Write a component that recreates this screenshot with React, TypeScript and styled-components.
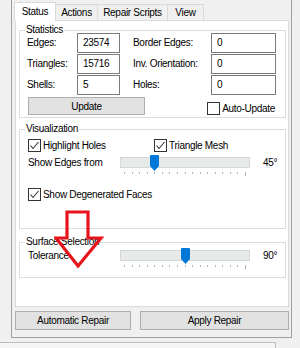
import styled, { createGlobalStyle } from "styled-components";

const GlobalStyle = createGlobalStyle`
	* {
		box-sizing: border-box;
	}

	html,
	body {
		margin: 0;
		padding: 0;
	}

	body {
		background-color: #f0f0f0;
		font-family: "Liberation Sans", Arial, sans-serif;
		font-size: 10px;
		letter-spacing: -0.3px;
		color: #000;
	}
`;

const Window = styled.div`
	width: 300px;
	height: 348px;
	position: relative;
	overflow: hidden;
`;

const Frame = styled.div`
	margin-left: 11px;
	width: 281px;
	height: 338px;
	border: 1px solid #a0a0a0;
	border-top: none;
	padding: 2px 1px 7px 3px;
	display: flex;
	flex-direction: column;
`;

const TabStrip = styled.div`
	height: 18px;
	margin-left: -1px;
	display: flex;
	align-items: flex-end;
`;

const Tab = styled.div<{ $active?: boolean; $width: number }>`
	width: ${(p) => p.$width}px;
	height: ${(p) => (p.$active ? 19 : 16)}px;
	margin-bottom: ${(p) => (p.$active ? -1 : 0)}px;
	position: relative;
	z-index: ${(p) => (p.$active ? 1 : 0)};
	background-color: ${(p) => (p.$active ? "#fff" : "#f0f0f0")};
	border: 1px solid #d9d9d9;
	border-bottom: none;
	border-left: ${(p) => (p.$active ? "1px solid #d9d9d9" : "none")};
	display: flex;
	justify-content: center;
	align-items: center;
	padding-bottom: ${(p) => (p.$active ? 1 : 0)}px;
`;

const Panel = styled.div`
	width: 274px;
	height: 287px;
	border: 1px solid #d9d9d9;
	background-color: #fff;
	padding: 3px 2px 0 3px;
`;

const Group = styled.fieldset<{ $gapTop?: number; $gapBottom: number }>`
	margin: ${(p) => p.$gapTop ?? 0}px 0 0 0;
	padding: 0 0 ${(p) => p.$gapBottom}px 8px;
	border: 1px solid #dcdcdc;
	min-width: 0;
`;

const Legend = styled.legend`
	margin-left: -3px;
	padding: 0 1px;
	line-height: 12px;
	height: 12px;
`;

const StatGrid = styled.div`
	margin: -3px 0 0 -1px;
	display: grid;
	grid-template-columns: 50px 43px 91px 65px;
	grid-template-rows: 20px 20px 20px;
	row-gap: 1px;
	align-items: center;
`;

const StatLabel = styled.span<{ $inset?: boolean }>`
	padding-left: ${(p) => (p.$inset ? 13 : 0)}px;
	padding-bottom: 1px;
`;

const Field = styled.input`
	width: 100%;
	height: 20px;
	margin: 0;
	border: 1px solid #7a7a7a;
	padding: 0 0 1px 5px;
	font: inherit;
	letter-spacing: inherit;
	color: #000;
	background-color: #fff;
	outline: none;
`;

const UpdateRow = styled.div`
	margin-top: 2px;
	height: 18px;
	padding-right: 10px;
	display: flex;
	justify-content: space-between;
	align-items: flex-end;
`;

const Button = styled.button<{ $width: number; $height: number }>`
	width: ${(p) => p.$width}px;
	height: ${(p) => p.$height}px;
	margin: 0;
	padding: 0;
	border: 1px solid #adadad;
	background-color: #e1e1e1;
	font: inherit;
	letter-spacing: inherit;
	color: #000;
`;

const Check = styled.label`
	height: 13px;
	display: flex;
	align-items: center;
	gap: 2px;
	line-height: 13px;
	white-space: nowrap;
`;

const Box = styled.span`
	width: 13px;
	height: 13px;
	flex: none;
	border: 1px solid #333;
	background-color: #fff;
	display: flex;

	svg {
		display: block;
	}
`;

const CheckRow = styled.div<{ $gapTop: number }>`
	margin-top: ${(p) => p.$gapTop}px;
	display: grid;
	grid-template-columns: 126px auto;
`;

const SliderRow = styled.div<{ $gapTop: number }>`
	margin-top: ${(p) => p.$gapTop}px;
	height: 21px;
	display: grid;
	grid-template-columns: 92px 130px auto;
`;

const RowText = styled.span<{ $inset?: number }>`
	padding-top: 2px;
	padding-left: ${(p) => p.$inset ?? 0}px;
	line-height: 11px;
	white-space: nowrap;
`;

const Slider = styled.div`
	position: relative;
	height: 21px;
`;

const Track = styled.div`
	margin-top: 2px;
	height: 11px;
	border: 1px solid #d6d6d6;
	background-color: #e7eaea;
`;

const Thumb = styled.svg`
	position: absolute;
	top: 0;
	display: block;
`;

const Ticks = styled.div`
	margin-top: 4px;
	padding: 0 4px;
	display: flex;
	justify-content: space-between;
	align-items: flex-start;
`;

const Tick = styled.span<{ $long?: boolean }>`
	width: 1px;
	height: ${(p) => (p.$long ? 4 : 2)}px;
	background-color: #b4b4b4;
`;

const ButtonRow = styled.div`
	margin-top: 4px;
	display: flex;
	gap: 9px;
`;

const BottomPane = styled.div`
	margin-top: 4px;
	width: 276px;
	height: 6px;
	border-top: 1px solid #bdbdbd;
	border-right: 1px solid #bdbdbd;
	background-color: #f5f5f5;
`;

const Arrow = styled.svg`
	position: absolute;
	left: 54px;
	top: 209px;
	z-index: 2;
`;

function CheckBox({ label, checked }: { label: string; checked?: boolean }) {
	return (
		<Check>
			<Box>
				{checked && (
					<svg width="11" height="11" viewBox="0 0 11 11">
						<polyline points="1.5,5.5 4,8.5 9.5,2" fill="none" stroke="#333" strokeWidth="1.1" />
					</svg>
				)}
			</Box>
			{label}
		</Check>
	);
}

function TrackBar({ value }: { value: number }) {
	const left = 4 + (value / 180) * 122 - 4.5;
	return (
		<Slider>
			<Track />
			<Thumb width="9" height="16" viewBox="0 0 9 16" style={{ left }}>
				<path d="M1,0 H8 Q9,0 9,1 V11 L4.5,16 L0,11 V1 Q0,0 1,0 Z" fill="#0078d7" />
			</Thumb>
			<Ticks>
				{Array.from({ length: 17 }, (_, i) => (
					<Tick key={i} $long={i === 16} />
				))}
			</Ticks>
		</Slider>
	);
}

const stats = [
	["Edges:", "23574", "Border Edges:", "0"],
	["Triangles:", "15716", "Inv. Orientation:", "0"],
	["Shells:", "5", "Holes:", "0"],
];

function App() {
	return (
		<Window>
			<GlobalStyle />
			<Frame>
				<TabStrip>
					<Tab $active $width={42}>Status</Tab>
					<Tab $width={42}>Actions</Tab>
					<Tab $width={70}>Repair Scripts</Tab>
					<Tab $width={36}>View</Tab>
				</TabStrip>
				<Panel>
					<Group $gapBottom={2}>
						<Legend>Statistics</Legend>
						<StatGrid>
							{stats.map(([a, av, b, bv]) => [
								<StatLabel key={a}>{a}</StatLabel>,
								<Field key={a + "v"} readOnly value={av} />,
								<StatLabel key={b} $inset>
									{b}
								</StatLabel>,
								<Field key={b + "v"} readOnly value={bv} />,
							])}
						</StatGrid>
						<UpdateRow>
							<Button $width={117} $height={18}>
								Update
							</Button>
							<CheckBox label="Auto-Update" />
						</UpdateRow>
					</Group>

					<Group $gapTop={5} $gapBottom={27}>
						<Legend>Visualization</Legend>
						<CheckRow $gapTop={4}>
							<CheckBox label="Highlight Holes" checked />
							<CheckBox label="Triangle Mesh" checked />
						</CheckRow>
						<SliderRow $gapTop={3}>
							<RowText>Show Edges from</RowText>
							<TrackBar value={45} />
							<RowText $inset={13}>45°</RowText>
						</SliderRow>
						<CheckRow $gapTop={12}>
							<CheckBox label="Show Degenerated Faces" checked />
						</CheckRow>
					</Group>

					<Group $gapTop={7} $gapBottom={8}>
						<Legend>Surface Selection</Legend>
						<SliderRow $gapTop={0}>
							<RowText $inset={-1}>Tolerance</RowText>
							<TrackBar value={90} />
							<RowText $inset={13}>90°</RowText>
						</SliderRow>
					</Group>
				</Panel>
				<ButtonRow>
					<Button $width={116} $height={19}>
						Automatic Repair
					</Button>
					<Button $width={149} $height={19}>
						Apply Repair
					</Button>
				</ButtonRow>
			</Frame>
			<BottomPane />
			<Arrow width="52" height="62" viewBox="0 0 52 62">
				<path
					d="M13,3 H34 V29 H47 L24,57 L2,29 H13 Z"
					fill="none"
					stroke="#e8141c"
					strokeWidth="3.2"
					strokeLinejoin="miter"
				/>
			</Arrow>
		</Window>
	);
}

export default App;
